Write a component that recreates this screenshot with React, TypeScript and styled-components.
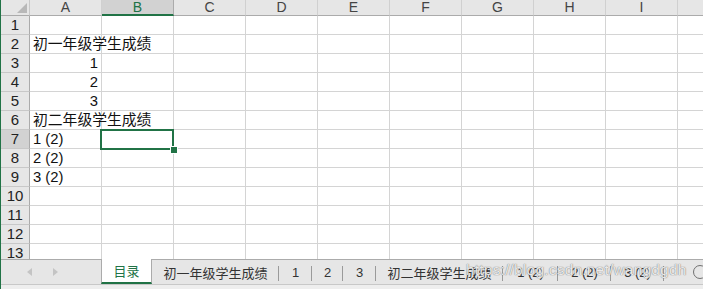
import React from "react";
import styled, { createGlobalStyle } from "styled-components";

const GlobalStyle = createGlobalStyle`
  html, body { margin: 0; padding: 0; background: #ffffff; overflow: hidden; }
  body { font-family: "Liberation Sans", "Noto Sans CJK SC", sans-serif; }
`;

const GREEN = "#217346";
const COLS = ["A", "B", "C", "D", "E", "F", "G", "H", "I", "J"];
const ROWS = 13;

const cells: Record<string, { text: string; align?: "left" | "right" }> = {
  "A2": { text: "初一年级学生成绩" },
  "A3": { text: "1", align: "right" },
  "A4": { text: "2", align: "right" },
  "A5": { text: "3", align: "right" },
  "A6": { text: "初二年级学生成绩" },
  "A7": { text: "1 (2)" },
  "A8": { text: "2 (2)" },
  "A9": { text: "3 (2)" },
};

const tabs = [
  { label: "目录", width: 51, active: true },
  { label: "初一年级学生成绩", width: 127 },
  { label: "1", width: 33 },
  { label: "2", width: 31 },
  { label: "3", width: 33 },
  { label: "初二年级学生成绩", width: 127 },
  { label: "1 (2)", width: 55 },
  { label: "2 (2)", width: 53 },
  { label: "3 (2)", width: 53 },
];

const Window = styled.div`
  width: 703px;
  height: 289px;
  display: flex;
  flex-direction: column;
  border-left: 1px solid ${GREEN};
  box-sizing: border-box;
  position: relative;
  overflow: hidden;
`;

const SheetArea = styled.div`
  height: 259px;
  overflow: hidden;
  flex: none;
`;

const Grid = styled.div`
  display: grid;
  grid-template-columns: 29px repeat(10, 72px);
  grid-template-rows: 16px repeat(${ROWS}, 19px);
`;

const Corner = styled.div`
  background: #e6e6e6;
  border-right: 1px solid #c8c8c8;
  border-bottom: 1px solid #ababab;
  box-sizing: border-box;
  position: relative;
  &::after {
    content: "";
    position: absolute;
    right: 2px;
    bottom: 2px;
    width: 0;
    height: 0;
    border-style: solid;
    border-width: 0 0 10px 10px;
    border-color: transparent transparent #b8b8b8 transparent;
  }
`;

const ColHeader = styled.div<{ $active?: boolean }>`
  background: ${(p) => (p.$active ? "#d2d2d2" : "#e6e6e6")};
  color: ${(p) => (p.$active ? GREEN : "#444444")};
  border-right: 1px solid ${(p) => (p.$active ? "#ababab" : "#d0d0d0")};
  border-bottom: ${(p) => (p.$active ? `2px solid ${GREEN}` : "1px solid #ababab")};
  box-sizing: border-box;
  font-size: 14px;
  line-height: 15px;
  display: flex;
  justify-content: center;
  align-items: center;
`;

const RowHeader = styled.div<{ $active?: boolean }>`
  background: ${(p) => (p.$active ? "#d2d2d2" : "#e6e6e6")};
  color: #222222;
  border-right: 1px solid #ababab;
  border-bottom: 1px solid #c8c8c8;
  box-sizing: border-box;
  font-size: 15px;
  line-height: 18px;
  display: flex;
  justify-content: center;
  align-items: center;
`;

const Cell = styled.div<{ $align?: "left" | "right" }>`
  border-right: 1px solid #d4d4d4;
  border-bottom: 1px solid #d4d4d4;
  box-sizing: border-box;
  position: relative;
  font-size: 14.8px;
  line-height: 18px;
  color: #111111;
  padding: 0 3px 0 3px;
  white-space: nowrap;
  text-align: ${(p) => (p.$align === "right" ? "right" : "left")};
  overflow: visible;
`;

const CellText = styled.span`
  position: relative;
  z-index: 1;
`;

const Selection = styled.div`
  position: absolute;
  left: -2px;
  top: -1px;
  width: 74px;
  height: 21px;
  border: 2px solid ${GREEN};
  box-sizing: border-box;
  z-index: 2;
`;

const FillHandle = styled.div`
  position: absolute;
  right: -5px;
  bottom: -5px;
  width: 6px;
  height: 6px;
  background: ${GREEN};
  outline: 1px solid #ffffff;
`;

const TabBar = styled.div`
  height: 30px;
  flex: none;
  background: #e6e6e6;
  border-top: 1px solid #ababab;
  box-sizing: border-box;
  display: flex;
  align-items: stretch;
  position: relative;
`;

const NavArea = styled.div`
  width: 100px;
  flex: none;
  display: flex;
  align-items: center;
  padding-left: 26px;
  gap: 21px;
  padding-bottom: 5px;
  box-sizing: border-box;
`;

const NavArrow = styled.span`
  width: 0;
  height: 0;
  border-style: solid;
  border-width: 4px 0 4px 5px;
  border-color: transparent transparent transparent #c4c4c4;
  &:first-child {
    border-width: 4px 5px 4px 0;
    border-color: transparent #c4c4c4 transparent transparent;
  }
`;

const Tab = styled.div<{ $active?: boolean }>`
  flex: none;
  box-sizing: border-box;
  height: 25px;
  display: flex;
  align-items: center;
  justify-content: center;
  font-size: 13px;
  color: ${(p) => (p.$active ? GREEN : "#333333")};
  background: ${(p) => (p.$active ? "#ffffff" : "transparent")};
  border-left: ${(p) => (p.$active ? "1px solid #ababab" : "none")};
  border-right: ${(p) => (p.$active ? "1px solid #ababab" : "none")};
  border-bottom: ${(p) => (p.$active ? `2px solid ${GREEN}` : "none")};
  margin-top: ${(p) => (p.$active ? "-1px" : "0")};
  position: relative;
  white-space: nowrap;
  &::after {
    content: "";
    display: ${(p) => (p.$active ? "none" : "block")};
    position: absolute;
    right: 0;
    top: 6px;
    height: 15px;
    width: 1px;
    background: #9a9a9a;
  }
`;

const BottomStrip = styled.div`
  position: absolute;
  left: 0;
  right: 0;
  bottom: 0;
  height: 4px;
  border-top: 1px solid #c8c8c8;
  background: #eeeeee;
`;

const AddButton = styled.div`
  position: absolute;
  left: 692px;
  top: 5px;
  width: 14px;
  height: 14px;
  border: 1px solid #707070;
  border-radius: 50%;
  box-sizing: border-box;
`;

const Watermark = styled.div`
  position: absolute;
  left: 465px;
  top: 261px;
  font-family: "Liberation Sans", sans-serif;
  font-size: 15.5px;
  letter-spacing: 0.2px;
  color: rgba(255, 255, 255, 0.85);
  text-shadow: 0 0 1px rgba(90, 90, 90, 0.75), 0 0 1px rgba(90, 90, 90, 0.5);
  pointer-events: none;
  white-space: nowrap;
  z-index: 5;
`;

export default function App() {
  const rows = Array.from({ length: ROWS }, (_, i) => i + 1);
  return (
    <>
      <GlobalStyle />
      <Window>
        <SheetArea>
          <Grid>
            <Corner />
            {COLS.map((c) => (
              <ColHeader key={c} $active={c === "B"}>
                {c}
              </ColHeader>
            ))}
            {rows.map((r) => (
              <React.Fragment key={r}>
                <RowHeader $active={r === 7}>{r}</RowHeader>
                {COLS.map((c) => {
                  const id = `${c}${r}`;
                  const cell = cells[id];
                  return (
                    <Cell key={id} $align={cell?.align}>
                      {cell && <CellText>{cell.text}</CellText>}
                      {id === "B7" && (
                        <Selection>
                          <FillHandle />
                        </Selection>
                      )}
                    </Cell>
                  );
                })}
              </React.Fragment>
            ))}
          </Grid>
        </SheetArea>
        <TabBar>
          <NavArea>
            <NavArrow />
            <NavArrow />
          </NavArea>
          {tabs.map((t) => (
            <Tab key={t.label} $active={t.active} style={{ width: t.width }}>
              {t.label}
            </Tab>
          ))}
          <AddButton />
          <BottomStrip />
        </TabBar>
        <Watermark>https://blog.csdn.net/wangdgdh</Watermark>
      </Window>
    </>
  );
}
